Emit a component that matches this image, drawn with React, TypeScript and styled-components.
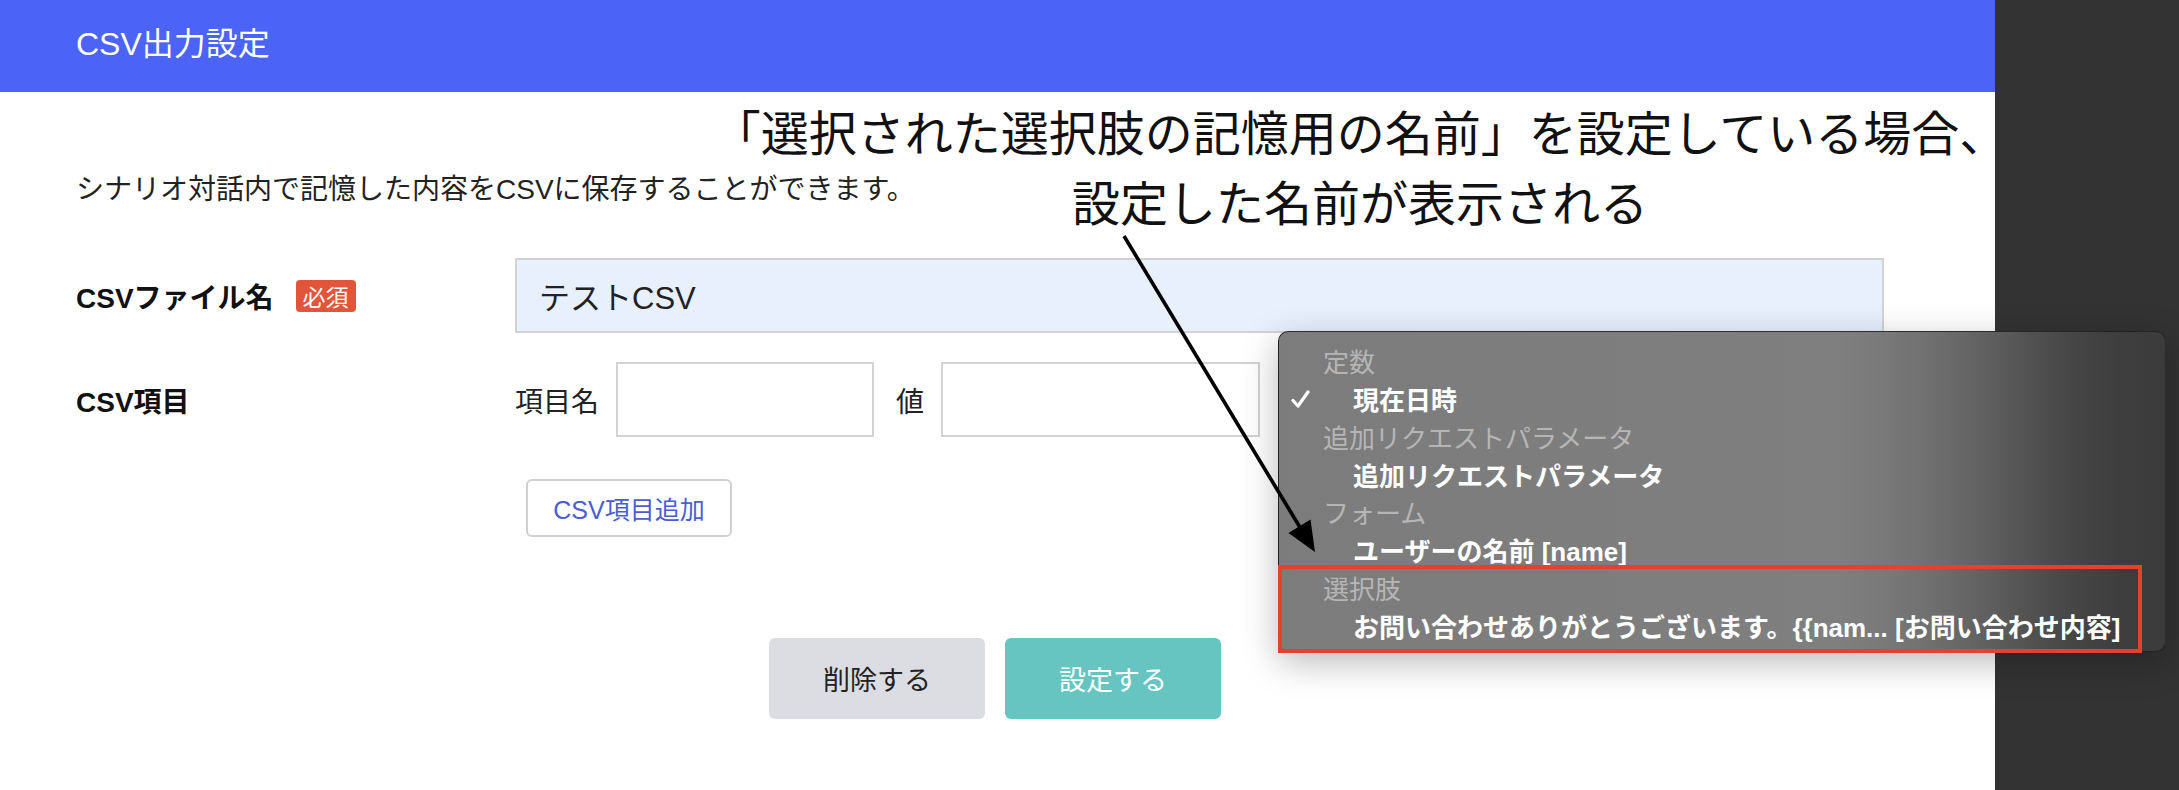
import React from "react";
import styled, { createGlobalStyle } from "styled-components";

const GlobalStyle = createGlobalStyle`
  html, body {
    margin: 0;
    padding: 0;
  }
  body {
    width: 2179px;
    height: 790px;
    overflow: hidden;
    font-family: "Liberation Sans", "Noto Sans CJK JP", sans-serif;
    color: #222;
  }
  * {
    box-sizing: border-box;
  }
`;

const Screen = styled.div`
  position: relative;
  display: grid;
  grid-template-columns: 1995px 1fr;
  width: 2179px;
  height: 790px;
`;

const Page = styled.main`
  background: #fff;
  display: flex;
  flex-direction: column;
`;

const SidePanel = styled.aside`
  background: #333333;
`;

const TitleBar = styled.header`
  height: 92px;
  background: #4b63f6;
  color: #fff;
  display: flex;
  align-items: center;
  padding: 0 0 10px 76px;
  font-size: 32px;
`;

const Body = styled.div`
  padding: 0 111px 0 76px;
  display: flex;
  flex-direction: column;
`;

const Lead = styled.p`
  margin: 78px 0 0;
  font-size: 28px;
  line-height: 40px;
  color: #222;
`;

const FieldRow = styled.div<{ $gap: number }>`
  display: grid;
  grid-template-columns: 439px 1fr;
  align-items: center;
  margin-top: ${(p) => p.$gap}px;
`;

const FieldLabel = styled.div`
  display: flex;
  align-items: center;
  gap: 22px;
  font-size: 28px;
  font-weight: 700;
  color: #111;
`;

const Badge = styled.span`
  display: inline-flex;
  align-items: center;
  justify-content: center;
  width: 60px;
  height: 32px;
  border-radius: 4px;
  background: #e2553a;
  color: #fff;
  font-size: 23px;
  font-weight: 400;
`;

const TextInput = styled.input<{ $width?: number; $filled?: boolean }>`
  width: ${(p) => (p.$width ? `${p.$width}px` : "100%")};
  height: 75px;
  padding: 0 22px;
  border: 2px solid #d3d3d3;
  border-radius: 0;
  background: ${(p) => (p.$filled ? "#e8f0fe" : "#fff")};
  font-family: inherit;
  font-size: 31px;
  color: #222;
  outline: none;
`;

const PairList = styled.div`
  display: flex;
  align-items: center;
  gap: 22px;
`;

const Pair = styled.label`
  display: flex;
  align-items: center;
  gap: 17px;
  font-size: 28px;
  color: #222;
`;

const AddButton = styled.button`
  align-self: flex-start;
  margin: 42px 0 0 450px;
  width: 206px;
  height: 58px;
  border: 2px solid #d0d0d0;
  border-radius: 6px;
  background: #fff;
  color: #4a5dd3;
  font-family: inherit;
  font-size: 25px;
`;

const Actions = styled.div`
  display: flex;
  justify-content: center;
  gap: 20px;
  margin-top: 101px;
  padding-right: 5px;
`;

const ActionButton = styled.button<{ $primary?: boolean }>`
  width: 216px;
  height: 81px;
  border: none;
  border-radius: 6px;
  background: ${(p) => (p.$primary ? "#66c5c1" : "#dcdde2")};
  color: ${(p) => (p.$primary ? "#fff" : "#222")};
  font-family: inherit;
  font-size: 27px;
`;

/* callout text and arrow laid over the form */
const Callout = styled.div`
  position: absolute;
  top: 95px;
  left: 700px;
  width: 1320px;
  text-align: center;
  font-family: "Noto Sans CJK JP", sans-serif;
  font-size: 48px;
  line-height: 70px;
  color: #111;
  z-index: 1;
`;

const Pointer = styled.svg`
  position: absolute;
  top: 0;
  left: 0;
  pointer-events: none;
  z-index: 4;
`;

/* context menu opened from the value field */
const Menu = styled.div`
  position: absolute;
  left: 1278px;
  top: 331px;
  width: 888px;
  padding: 10px 0 7px;
  border: 1px solid rgba(30, 30, 30, 0.85);
  border-radius: 10px;
  background: linear-gradient(
    to right,
    #7c7c7c 0px,
    #7f7f7f 560px,
    #7a7a7a 600px,
    #707070 650px,
    #656565 690px,
    #5d5d5d 717px,
    #525252 750px,
    #474747 790px,
    #3e3e3e 840px,
    #3b3b3b 100%
  );
  box-shadow: 0 10px 36px rgba(0, 0, 0, 0.28);
  font-size: 26px;
  z-index: 2;
`;

const MenuRow = styled.div<{ $header?: boolean }>`
  display: flex;
  align-items: center;
  height: 37.75px;
  padding-left: ${(p) => (p.$header ? 44 : 0)}px;
  color: ${(p) => (p.$header ? "rgba(255, 255, 255, 0.45)" : "#fff")};
  font-weight: ${(p) => (p.$header ? 400 : 700)};
  white-space: nowrap;
`;

const CheckSlot = styled.span`
  display: flex;
  align-items: center;
  width: 74px;
  padding-left: 12px;
`;

const Highlight = styled.div`
  position: absolute;
  left: -1px;
  top: 233px;
  width: 864px;
  height: 88px;
  border: 4px solid #e2432b;
  pointer-events: none;
`;

type MenuGroup = {
  title: string;
  items: { label: string; checked?: boolean }[];
};

const menuGroups: MenuGroup[] = [
  { title: "定数", items: [{ label: "現在日時", checked: true }] },
  { title: "追加リクエストパラメータ", items: [{ label: "追加リクエストパラメータ" }] },
  { title: "フォーム", items: [{ label: "ユーザーの名前 [name]" }] },
  {
    title: "選択肢",
    items: [{ label: "お問い合わせありがとうございます。{{nam... [お問い合わせ内容]" }],
  },
];

const CheckMark = () => (
  <svg width="19" height="18" viewBox="0 0 19 18">
    <path
      d="M2 10.5 L7 16 L17 2"
      fill="none"
      stroke="#fff"
      strokeWidth="3.2"
      strokeLinecap="round"
      strokeLinejoin="round"
    />
  </svg>
);

const App: React.FC = () => {
  return (
    <>
      <GlobalStyle />
      <Screen>
        <Page>
          <TitleBar>CSV出力設定</TitleBar>
          <Body>
            <Lead>シナリオ対話内で記憶した内容をCSVに保存することができます。</Lead>
            <FieldRow $gap={48}>
              <FieldLabel>
                CSVファイル名
                <Badge>必須</Badge>
              </FieldLabel>
              <TextInput $filled value="テストCSV" readOnly />
            </FieldRow>
            <FieldRow $gap={29}>
              <FieldLabel>CSV項目</FieldLabel>
              <PairList>
                <Pair>
                  項目名
                  <TextInput $width={258} />
                </Pair>
                <Pair>
                  値
                  <TextInput $width={319} />
                </Pair>
              </PairList>
            </FieldRow>
            <AddButton>CSV項目追加</AddButton>
          </Body>
          <Actions>
            <ActionButton>削除する</ActionButton>
            <ActionButton $primary>設定する</ActionButton>
          </Actions>
        </Page>
        <SidePanel />

        <Callout>
          <div>「選択された選択肢の記憶用の名前」を設定している場合、</div>
          <div>設定した名前が表示される</div>
        </Callout>

        <Menu>
          {menuGroups.map((group) => (
            <React.Fragment key={group.title}>
              <MenuRow $header>{group.title}</MenuRow>
              {group.items.map((item) => (
                <MenuRow key={item.label}>
                  <CheckSlot>{item.checked && <CheckMark />}</CheckSlot>
                  {item.label}
                </MenuRow>
              ))}
            </React.Fragment>
          ))}
          <Highlight />
        </Menu>

        <Pointer width="2179" height="790" viewBox="0 0 2179 790">
          <line x1="1124" y1="236" x2="1301" y2="529" stroke="#000" strokeWidth="3.6" />
          <polygon points="1315,552 1288.5,533 1310.5,519.5" fill="#000" />
        </Pointer>
      </Screen>
    </>
  );
};

export default App;
